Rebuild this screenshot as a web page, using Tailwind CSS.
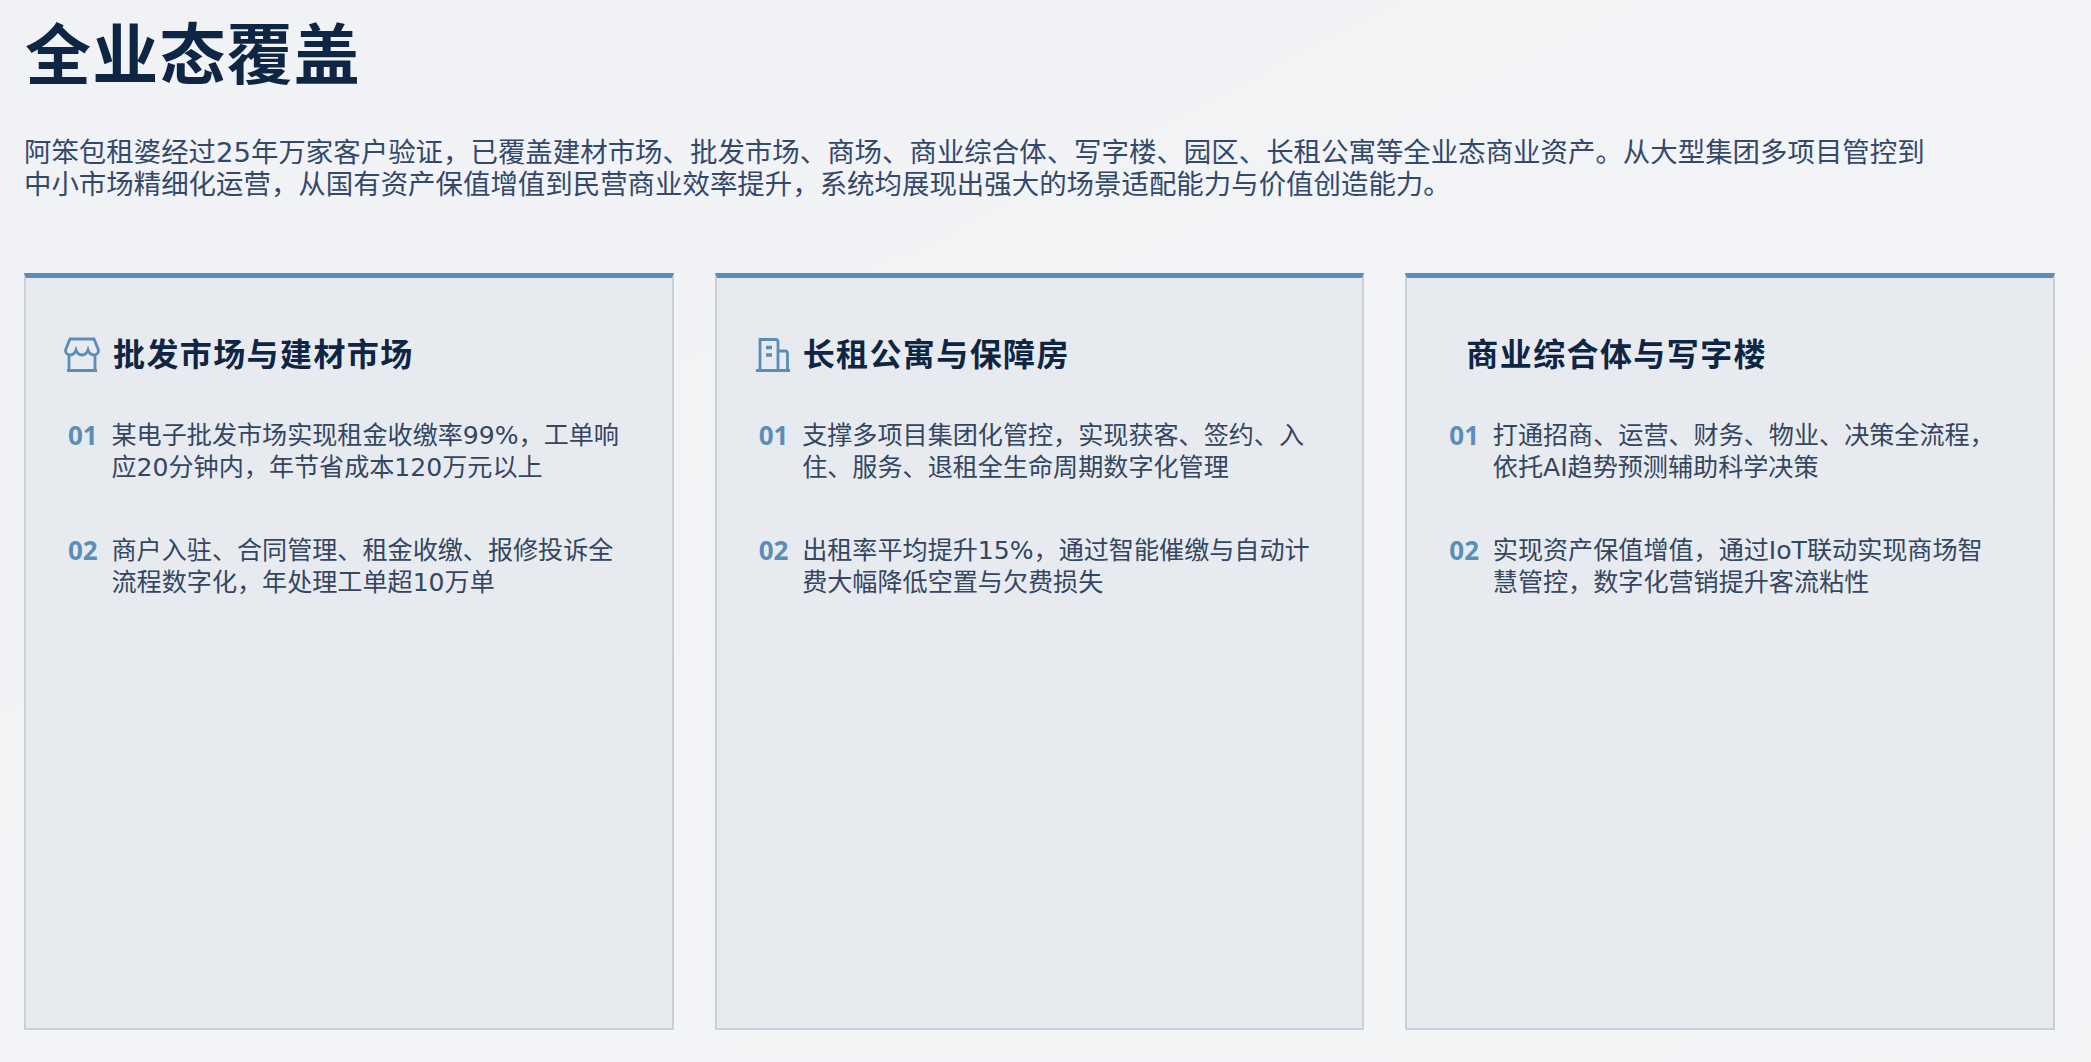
<!DOCTYPE html>
<html lang="zh-CN">
<head>
    <meta charset="UTF-8">
    <title>全业态覆盖</title>
    <script src="https://cdn.jsdelivr.net/npm/@tailwindcss/browser@4"></script>
</head>
<body class="w-[2091px] h-[1062px] overflow-hidden bg-gradient-to-br from-[#f0f2f5] to-[#f4f5f7] font-['DejaVu_Sans','Noto_Sans_CJK_SC',sans-serif]">
    <div class="flex flex-col h-full pl-[24px] pr-[36px] pt-[18px] pb-[32px]">
        <h1 class="pl-[1px] text-[66px] leading-[78px] font-bold tracking-[1.2px] text-[#0f2544]">全业态覆盖</h1>
        <p class="mt-[41px] w-[1915px] text-[27.45px] leading-[32px] text-[#34496a]">阿笨包租婆经过25年万家客户验证，已覆盖建材市场、批发市场、商场、商业综合体、写字楼、园区、长租公寓等全业态商业资产。从大型集团多项目管控到中小市场精细化运营，从国有资产保值增值到民营商业效率提升，系统均展现出强大的场景适配能力与价值创造能力。</p>

        <div class="grid grid-cols-3 gap-[41px] mt-[72px] flex-1">
            <div class="bg-[#e7ebf0] border-2 border-[#c8d0da] border-t-[5px] border-t-[#5b8db8] pl-[38px] pr-[50px] pt-[57px]">
                <div class="flex items-center h-[40px]">
                    <svg class="w-[36px] h-[36px] mr-[13px]" viewBox="0 0 36 36" fill="none" stroke="#5b8db8" stroke-width="2.8">
                        <path d="M6 2h24l4.5 11c0 3-2 5-4.5 5-3 0-5-2-6-5-1 3-3 5-6 5s-5-2-6-5c-1 3-3 5-6 5-2.5 0-4.5-2-4.5-5z"/>
                        <path d="M5 17v16M31 17v16M3 33.5h30"/>
                    </svg>
                    <h2 class="text-[32px] font-bold tracking-[1.4px] text-[#0f2544]">批发市场与建材市场</h2>
                </div>
                <div class="mt-[45px] flex flex-col gap-[52px]">
                    <div class="flex">
                        <span class="w-[47px] shrink-0 pl-[4px] font-['Noto_Sans',sans-serif] text-[26px] leading-[31px] font-bold text-[#5b8db8]">01</span>
                        <p class="pl-[0.5px] text-[25.1px] leading-[31.5px] text-[#344660]">某电子批发市场实现租金收缴率99%，工单响应20分钟内，年节省成本120万元以上</p>
                    </div>
                    <div class="flex">
                        <span class="w-[47px] shrink-0 pl-[4px] font-['Noto_Sans',sans-serif] text-[26px] leading-[31px] font-bold text-[#5b8db8]">02</span>
                        <p class="pl-[0.5px] text-[25.1px] leading-[31.5px] text-[#344660]">商户入驻、合同管理、租金收缴、报修投诉全流程数字化，年处理工单超10万单</p>
                    </div>
                </div>
            </div>

            <div class="bg-[#e7ebf0] border-2 border-[#c8d0da] border-t-[5px] border-t-[#5b8db8] pl-[38px] pr-[50px] pt-[57px]">
                <div class="flex items-center h-[40px]">
                    <svg class="w-[36px] h-[36px] mr-[12px]" viewBox="0 0 36 36" fill="none" stroke="#5b8db8" stroke-width="2.8">
                        <path d="M1 33.5h34M5 33V2.5h15.5q2.5 0 2.5 2.5v28M23 14h7q2.5 0 2.5 2.5V33"/>
                        <path d="M11 10.5h6M11 18h6" stroke-width="3.5"/>
                    </svg>
                    <h2 class="text-[32px] font-bold tracking-[1.4px] text-[#0f2544]">长租公寓与保障房</h2>
                </div>
                <div class="mt-[45px] flex flex-col gap-[52px]">
                    <div class="flex">
                        <span class="w-[47px] shrink-0 pl-[4px] font-['Noto_Sans',sans-serif] text-[26px] leading-[31px] font-bold text-[#5b8db8]">01</span>
                        <p class="pl-[0.5px] text-[25.1px] leading-[31.5px] text-[#344660]">支撑多项目集团化管控，实现获客、签约、入住、服务、退租全生命周期数字化管理</p>
                    </div>
                    <div class="flex">
                        <span class="w-[47px] shrink-0 pl-[4px] font-['Noto_Sans',sans-serif] text-[26px] leading-[31px] font-bold text-[#5b8db8]">02</span>
                        <p class="pl-[0.5px] text-[25.1px] leading-[31.5px] text-[#344660]">出租率平均提升15%，通过智能催缴与自动计费大幅降低空置与欠费损失</p>
                    </div>
                </div>
            </div>

            <div class="bg-[#e7ebf0] border-2 border-[#c8d0da] border-t-[5px] border-t-[#5b8db8] pl-[38px] pr-[50px] pt-[57px]">
                <div class="flex items-center h-[40px]">
                    <div class="w-[8px] h-[36px] mr-[13px]"></div>
                    <h2 class="text-[32px] font-bold tracking-[1.4px] text-[#0f2544]">商业综合体与写字楼</h2>
                </div>
                <div class="mt-[45px] flex flex-col gap-[52px]">
                    <div class="flex">
                        <span class="w-[47px] shrink-0 pl-[4px] font-['Noto_Sans',sans-serif] text-[26px] leading-[31px] font-bold text-[#5b8db8]">01</span>
                        <p class="pl-[0.5px] text-[25.1px] leading-[31.5px] text-[#344660]">打通招商、运营、财务、物业、决策全流程，依托AI趋势预测辅助科学决策</p>
                    </div>
                    <div class="flex">
                        <span class="w-[47px] shrink-0 pl-[4px] font-['Noto_Sans',sans-serif] text-[26px] leading-[31px] font-bold text-[#5b8db8]">02</span>
                        <p class="pl-[0.5px] text-[25.1px] leading-[31.5px] text-[#344660]">实现资产保值增值，通过IoT联动实现商场智慧管控，数字化营销提升客流粘性</p>
                    </div>
                </div>
            </div>
        </div>
    </div>
</body>
</html>
